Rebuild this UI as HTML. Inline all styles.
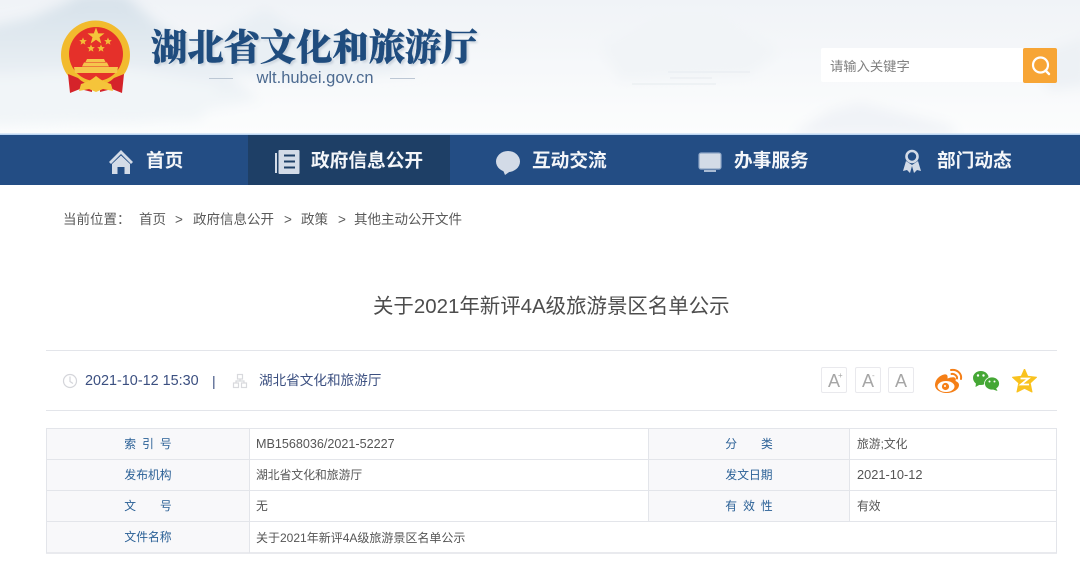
<!DOCTYPE html>
<html lang="zh"><head><meta charset="utf-8"><title>关于2021年新评4A级旅游景区名单公示</title>
<style>
html,body{margin:0;padding:0;background:#fff}
body{width:1080px;height:577px;overflow:hidden;position:relative;font-family:"Liberation Sans","Noto Sans CJK SC",sans-serif}
.a{position:absolute;white-space:nowrap;line-height:1}
.n{color:#f4f6f9;font-size:18.7px;font-weight:700;top:152px}
.c{font-size:13.5px;color:#5a5a5a;top:213px}
.l{position:absolute;background:#e3e5ea}
.k{font-size:11.8px;color:#2a6096;width:60px;text-align:center}
.v{font-size:11.8px;color:#555}
.b{position:absolute;top:367px;width:26px;height:26px;box-sizing:border-box;border:1px solid #e9e9ed;border-radius:2px;color:#a6a6a6;font-size:18px;line-height:26px;text-align:center;background:#fff}
.b span{position:absolute;font-size:8px;top:-5px;left:16px}
</style></head><body>
<svg class="a" style="left:0;top:0" width="1080" height="135" viewBox="0 0 1080 135">
<defs><linearGradient id="bg" x1="0" y1="0" x2="0" y2="1"><stop offset="0" stop-color="#f0f3f7"/><stop offset="1" stop-color="#fcfdfd"/></linearGradient>
<filter id="bl"><feGaussianBlur stdDeviation="6"/></filter>
<linearGradient id="m" x1="0" y1="0" x2="0" y2="1"><stop offset="0" stop-color="#d6e1ea"/><stop offset="0.6" stop-color="#e9eff4"/><stop offset="1" stop-color="#f8fafb"/></linearGradient></defs>
<rect width="1080" height="135" fill="url(#bg)"/>
<g filter="url(#bl)">
<path d="M-20 28 L30 18 L65 3 L80 -5 L125 -5 L155 22 L200 50 L260 100 L140 125 L-20 120Z" fill="url(#m)"/>
<path d="M190 45 L240 22 L265 8 L290 25 L340 35 L420 70 L300 80 L210 70Z" fill="#e9eff4"/>
<path d="M-10 75 L130 68 L220 85 L200 120 L-10 125Z" fill="#f1f5f8"/>
<path d="M600 45 L660 15 L720 15 L780 50 L750 75 L620 80Z" fill="#f1f4f7"/>
<path d="M790 135 L830 110 L860 102 L950 125 L960 135Z" fill="#f0f3f7"/>
<path d="M1030 55 L1090 35 L1090 85 L1050 90Z" fill="#edf1f5"/>
</g>
<path d="M668 72 H750 M670 78 H712 M632 84 H716" stroke="#e9edf1" stroke-width="1.300" fill="none"/>
<rect y="133.500" width="1080" height="1.500" fill="#bcd6f2"/>
<!-- emblem -->
<circle cx="95.500" cy="55" r="34.500" fill="#f2bb2e"/>
<circle cx="96" cy="54" r="27" fill="#e5302a"/>
<polygon points="96,27.500 98.200,33.400 104.500,33.400 99.500,37.200 101.300,43.500 96,39.800 90.700,43.500 92.500,37.200 87.500,33.400 93.800,33.400" fill="#f5c43a"/>
<g fill="#f3bd36"><polygon points="83,37.500 84.100,40 86.800,40.200 84.700,42 85.400,44.600 83,43.200 80.600,44.600 81.300,42 79.200,40.200 81.900,40"/><polygon points="108,37.500 109.100,40 111.800,40.200 109.700,42 110.400,44.600 108,43.200 105.600,44.600 106.300,42 104.200,40.200 106.900,40"/><polygon points="91,44.500 92.100,47 94.800,47.200 92.700,49 93.400,51.600 91,50.200 88.600,51.600 89.300,49 87.200,47.200 89.900,47"/><polygon points="101,44.500 102.100,47 104.800,47.200 102.700,49 103.400,51.600 101,50.200 98.600,51.600 99.300,49 97.200,47.200 99.900,47"/></g>
<path d="M87 59h17l1.500 3H85.500zM84 62.500h23l2 4H82zM74 67h44l-1 6H75z" fill="#f5c64c"/>
<path d="M68 74 L78 78 Q84 84 92 85 L92 92 L80 89 L70 93Z" fill="#d5232a"/>
<path d="M124 74 L114 78 Q108 84 100 85 L100 92 L112 89 L122 93Z" fill="#d5232a"/>
<path d="M81 84 Q88 82 92 79 L96 76 L100 79 Q104 82 111 84 L113 91 L103 89 L96 92 L89 89 L79 91Z" fill="#f5c43a"/>
<path d="M209 78.500 H233 M390 78.500 H415" stroke="#bcc7d4" stroke-width="1"/>
</svg>
<div class="a" style="left:151px;top:25px;font-family:'Noto Serif CJK SC',serif;font-size:36.300px;font-weight:900;color:#1f4c7e;-webkit-text-stroke:.4px #1f4c7e;text-shadow:2px 2px 2px #c9d2dc;line-height:40px">湖北省文化和旅游厅</div>
<div class="a" style="left:245px;top:70px;width:140px;text-align:center;font-size:16.500px;color:#4c6a90">wlt.hubei.gov.cn</div>
<div class="a" style="left:821px;top:48px;width:202px;height:34px;background:#fff;border-radius:2px 0 0 2px"></div>
<div class="a" style="left:830px;top:59.500px;font-size:13.300px;color:#808080">请输入关键字</div>
<svg class="a" style="left:1023px;top:48px" width="34" height="35" viewBox="0 0 34 35"><rect width="34" height="35" rx="2" fill="#f7a535"/><circle cx="17.500" cy="17" r="7.500" fill="none" stroke="#fff" stroke-width="2.200"/><path d="M22.500 22.500 L26 26" stroke="#fff" stroke-width="2.400" stroke-linecap="round"/></svg>

<div class="a" style="left:0;top:135px;width:1080px;height:50px;background:#234d84"></div>
<div class="a" style="left:248px;top:135px;width:202px;height:50px;background:#1e3f66"></div>
<svg class="a" style="left:0;top:135px" width="1080" height="50" viewBox="0 0 1080 50" fill="#d3dbe7">
<path d="M121 15 L133 27 L131 29 L121 19 L111 29 L109 27Z"/><path d="M112 29 L121 20.500 L130 29 V39 H124.500 V32 H117.500 V39 H112Z"/>
<rect x="278.500" y="15" width="21" height="24" rx="1"/><rect x="275" y="18" width="2" height="20"/>
<path d="M284 20.500h11M284 26.500h11M284 32.500h11" stroke="#1e3f66" stroke-width="2"/>
<ellipse cx="508" cy="26.500" rx="12" ry="10.500"/><path d="M503 35 L505 40 L512 35Z"/>
<rect x="699" y="18" width="22" height="16" rx="2" fill="#d3dbe7" stroke="#8ea6c6" stroke-width="1.200"/><rect x="704" y="35" width="12" height="2" fill="#a9bbd3"/>
<circle cx="912" cy="21.500" r="5.500" fill="none" stroke="#d3dbe7" stroke-width="2.600"/><path d="M906 26 L903 36 L907 35 L910 38 L912 31 L914 38 L917 35 L921 36 L918 26 L912 30Z"/>
</svg>
<div class="a n" style="left:146px">首页</div>
<div class="a n" style="left:311px">政府信息公开</div>
<div class="a n" style="left:532px">互动交流</div>
<div class="a n" style="left:734px">办事服务</div>
<div class="a n" style="left:937px">部门动态</div>

<div class="a c" style="left:63px">当前位置：</div>
<div class="a c" style="left:139px">首页</div>
<div class="a c" style="left:175px">&gt;</div>
<div class="a c" style="left:193px">政府信息公开</div>
<div class="a c" style="left:284px">&gt;</div>
<div class="a c" style="left:301px">政策</div>
<div class="a c" style="left:338px">&gt;</div>
<div class="a c" style="left:354px">其他主动公开文件</div>

<div class="a" style="left:373px;top:297px;font-size:20.450px;color:#4d4d4d">关于2021年新评4A级旅游景区名单公示</div>

<div class="l" style="left:46px;top:350px;width:1011px;height:1px"></div>
<div class="l" style="left:46px;top:410px;width:1011px;height:1px"></div>
<svg class="a" style="left:62px;top:373px" width="16" height="16" viewBox="0 0 16 16" fill="none" stroke="#d4d5da" stroke-width="1.200"><circle cx="8" cy="8" r="6.500"/><path d="M8 3.500V8.500L11 10.500"/></svg>
<div class="a" style="left:85px;top:374px;font-size:14.400px;color:#3b4f80">2021-10-12 15:30</div>
<div class="a" style="left:212px;top:374px;font-size:14px;color:#3b4f80">|</div>
<svg class="a" style="left:232px;top:373px" width="16" height="16" viewBox="0 0 16 16" fill="none" stroke="#d8d9dd" stroke-width="1.200"><rect x="5.500" y="1.500" width="5" height="4.500"/><rect x="1.500" y="10" width="5" height="4.500"/><rect x="9.500" y="10" width="5" height="4.500"/><path d="M8 6V8H4V10M8 8H12V10"/></svg>
<div class="a" style="left:259px;top:374px;font-size:13.600px;color:#3b4f80">湖北省文化和旅游厅</div>

<div class="b" style="left:821px">A<span>+</span></div>
<div class="b" style="left:855px">A<span>-</span></div>
<div class="b" style="left:888px">A</div>
<svg class="a" style="left:933px;top:367px" width="30" height="27" viewBox="0 0 30 27">
<path d="M11 7.500 C5 9 2 14 2 18 C2 23 8 26 13.500 26 C21 26 26 22 26 18 C26 15.500 23.500 14.500 22.500 14 C23.500 11 22 9.500 17.500 10.500 L14.500 11.500 C15 8.500 14 6.800 11 7.500Z" fill="#f57f17"/>
<ellipse cx="13" cy="19.500" rx="8.500" ry="5.500" fill="#fff"/><circle cx="12.500" cy="19.500" r="3.600" fill="#f57f17"/><circle cx="12" cy="19" r="1" fill="#fff"/>
<path d="M18 3 C24 2 29 6.500 28 12 M18.500 7 C21.500 6.500 24.500 9 24 11.500" fill="none" stroke="#f57f17" stroke-width="2" stroke-linecap="round"/></svg>
<svg class="a" style="left:972px;top:368px" width="29" height="24" viewBox="0 0 29 24" fill="#45a735">
<ellipse cx="8.800" cy="10" rx="7.800" ry="7"/><path d="M4 15 L3.500 19 L8 16.500Z"/>
<ellipse cx="20" cy="15.500" rx="7.500" ry="6.500" stroke="#fff" stroke-width=".8"/><path d="M24 20 L25.500 23 L21 21.500Z"/>
<circle cx="6" cy="7.500" r="1.200" fill="#fff"/><circle cx="11.500" cy="7.500" r="1.200" fill="#fff"/><circle cx="17.500" cy="13.500" r="1" fill="#fff"/><circle cx="22.500" cy="13.500" r="1" fill="#fff"/></svg>
<svg class="a" style="left:1012px;top:369px" width="25" height="24" viewBox="0 0 25 24">
<polygon points="12.500,0 15.700,7.300 24.500,8.300 18.200,14 20,23 12.500,19.300 5,23 6.800,14 .5,8.300 9.300,7.300" fill="#f9c21e" stroke="#f9c21e" stroke-width="1" stroke-linejoin="round"/>
<path d="M8.500 9.500H16.500L9 15.500H17" fill="none" stroke="#fff" stroke-width="1.800"/></svg>

<!-- table -->
<div class="a" style="left:47px;top:429px;width:202px;height:124px;background:#f8f8fa"></div>
<div class="a" style="left:649px;top:429px;width:200px;height:93px;background:#f8f8fa"></div>
<div class="l" style="left:46px;top:428px;width:1011px;height:1px"></div>
<div class="l" style="left:46px;top:459px;width:1011px;height:1px"></div>
<div class="l" style="left:46px;top:490px;width:1011px;height:1px"></div>
<div class="l" style="left:46px;top:521px;width:1011px;height:1px"></div>
<div class="l" style="left:46px;top:552px;width:1011px;height:2px;background:#e9eaee"></div>
<div class="l" style="left:46px;top:428px;width:1px;height:125px"></div>
<div class="l" style="left:249px;top:428px;width:1px;height:125px"></div>
<div class="l" style="left:648px;top:428px;width:1px;height:94px"></div>
<div class="l" style="left:849px;top:428px;width:1px;height:94px"></div>
<div class="l" style="left:1056px;top:428px;width:1px;height:125px"></div>

<div class="a k" style="left:118px;top:439px"><span style="letter-spacing:6px;margin-right:-6px">索引号</span></div>
<div class="a k" style="left:118px;top:470px">发布机构</div>
<div class="a k" style="left:118px;top:501px"><span style="letter-spacing:24px;margin-right:-24px">文号</span></div>
<div class="a k" style="left:118px;top:532px">文件名称</div>
<div class="a k" style="left:719px;top:439px"><span style="letter-spacing:24px;margin-right:-24px">分类</span></div>
<div class="a k" style="left:719px;top:470px">发文日期</div>
<div class="a k" style="left:719px;top:501px"><span style="letter-spacing:6px;margin-right:-6px">有效性</span></div>

<div class="a v" style="left:256px;top:438px;font-size:12.600px">MB1568036/2021-52227</div>
<div class="a v" style="left:256px;top:470px">湖北省文化和旅游厅</div>
<div class="a v" style="left:256px;top:501px">无</div>
<div class="a v" style="left:256px;top:532px;font-size:12px">关于2021年新评4A级旅游景区名单公示</div>
<div class="a v" style="left:857px;top:439px">旅游;文化</div>
<div class="a v" style="left:857px;top:469px;font-size:12.800px">2021-10-12</div>
<div class="a v" style="left:857px;top:501px">有效</div>
</body></html>
